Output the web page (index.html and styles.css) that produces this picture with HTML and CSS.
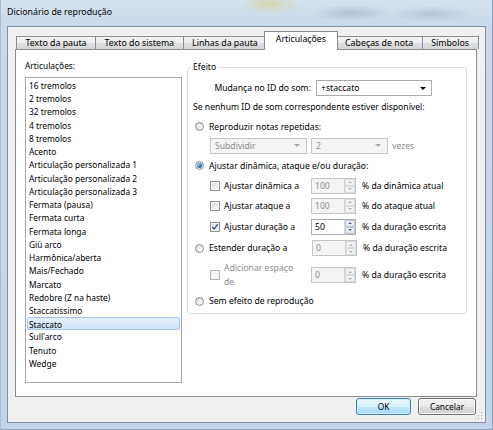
FILE: index.html
```html
<!DOCTYPE html>
<html>
<head>
<meta charset="utf-8">
<link rel="stylesheet" href="styles.css">
</head>
<body>
<div class="window">
  <div class="titlebar">
    <span class="title">Dicionário de reprodução</span>
  </div>
  <div class="client">
    <div class="tabs">
      <div class="tab">Texto da pauta</div>
      <div class="tab">Texto do sistema</div>
      <div class="tab">Linhas da pauta</div>
      <div class="tab active">Articulações</div>
      <div class="tab">Cabeças de nota</div>
      <div class="tab">Símbolos</div>
    </div>
    <div class="panel">
      <div class="leftcol">
        <div class="collabel">Articulações:</div>
        <div class="listbox">
          <div class="item">16 tremolos</div>
          <div class="item">2 tremolos</div>
          <div class="item">32 tremolos</div>
          <div class="item">4 tremolos</div>
          <div class="item">8 tremolos</div>
          <div class="item">Acento</div>
          <div class="item">Articulação personalizada 1</div>
          <div class="item">Articulação personalizada 2</div>
          <div class="item">Articulação personalizada 3</div>
          <div class="item">Fermata (pausa)</div>
          <div class="item">Fermata curta</div>
          <div class="item">Fermata longa</div>
          <div class="item">Giù arco</div>
          <div class="item">Harmônica/aberta</div>
          <div class="item">Mais/Fechado</div>
          <div class="item">Marcato</div>
          <div class="item">Redobre (Z na haste)</div>
          <div class="item">Staccatissimo</div>
          <div class="item selected">Staccato</div>
          <div class="item">Sull'arco</div>
          <div class="item">Tenuto</div>
          <div class="item">Wedge</div>
        </div>
      </div>
      <div class="group">
        <span class="legend">Efeito</span>
        <div class="row r1">
          <span class="rlabel">Mudança no ID do som:</span>
          <div class="combo main"><span class="ctext">+staccato</span><span class="arrow"></span></div>
        </div>
        <div class="row r2"><span class="plain">Se nenhum ID de som correspondente estiver disponível:</span></div>
        <div class="row r3">
          <span class="radio"></span><span>Reproduzir notas repetidas:</span>
        </div>
        <div class="row r4">
          <div class="combo dis wide"><span class="ctext">Subdividir</span><span class="arrow"></span></div>
          <div class="combo dis narrow"><span class="ctext">2</span><span class="arrow"></span></div>
          <span class="distext">vezes</span>
        </div>
        <div class="row r5">
          <span class="radio on"></span><span>Ajustar dinâmica, ataque e/ou duração:</span>
        </div>
        <div class="row r6 sub">
          <div class="chklabel"><span class="cb"></span><span>Ajustar dinâmica a</span></div>
          <div class="spin dis"><span class="stext">100</span><span class="sbtns"><span class="sb up"></span><span class="sb down"></span></span></div>
          <span class="after">% da dinâmica atual</span>
        </div>
        <div class="row r7 sub">
          <div class="chklabel"><span class="cb"></span><span>Ajustar ataque a</span></div>
          <div class="spin dis"><span class="stext">100</span><span class="sbtns"><span class="sb up"></span><span class="sb down"></span></span></div>
          <span class="after">% do ataque atual</span>
        </div>
        <div class="row r8 sub">
          <div class="chklabel"><span class="cb checked"><svg viewBox="0 0 10 10" width="8" height="8"><path d="M1.5 5 L4 7.5 L8.5 1.5" fill="none" stroke="#3d4f8a" stroke-width="1.6"/></svg></span><span>Ajustar duração a</span></div>
          <div class="spin"><span class="stext">50</span><span class="sbtns"><span class="sb up"></span><span class="sb down"></span></span></div>
          <span class="after">% da duração escrita</span>
        </div>
        <div class="row r9">
          <div class="radlabel"><span class="radio"></span><span>Estender duração a</span></div>
          <div class="spin dis"><span class="stext">0</span><span class="sbtns"><span class="sb up"></span><span class="sb down"></span></span></div>
          <span class="after">% da duração escrita</span>
        </div>
        <div class="row r10 sub">
          <div class="chklabel"><span class="cb dis"></span><span class="twoline">Adicionar espaço<br>de</span></div>
          <div class="spin dis"><span class="stext">0</span><span class="sbtns"><span class="sb up"></span><span class="sb down"></span></span></div>
          <span class="after">% da duração escrita</span>
        </div>
        <div class="row r11">
          <span class="radio"></span><span>Sem efeito de reprodução</span>
        </div>
      </div>
    </div>
    <div class="buttons">
      <div class="btn default">OK</div>
      <div class="btn">Cancelar</div>
    </div>
    <svg class="grip" width="8" height="8" viewBox="0 0 8 8">
      <rect x="6" y="0" width="1.2" height="1.2" fill="#b6b6b6"/>
      <rect x="3" y="3" width="1.2" height="1.2" fill="#b6b6b6"/>
      <rect x="6" y="3" width="1.2" height="1.2" fill="#b6b6b6"/>
      <rect x="0" y="6" width="1.2" height="1.2" fill="#b6b6b6"/>
      <rect x="3" y="6" width="1.2" height="1.2" fill="#b6b6b6"/>
      <rect x="6" y="6" width="1.2" height="1.2" fill="#b6b6b6"/>
    </svg>
  </div>
</div>
</body>
</html>
```

FILE: styles.css
```css
* { box-sizing: border-box; }
html, body { margin: 0; padding: 0; }
body {
  width: 493px;
  height: 430px;
  overflow: hidden;
  font-family: "Noto Sans", "Open Sans", sans-serif;
  font-size: 8.4px;
  color: #000;
  background: #c9d8e8;
}
.window {
  width: 493px;
  height: 430px;
  display: flex;
  flex-direction: column;
  background:
    radial-gradient(ellipse 30px 10px at 270px 4px, rgba(214, 206, 120, 0.55), rgba(214, 206, 120, 0) 100%),
    radial-gradient(ellipse 40px 8px at 350px 13px, rgba(120, 140, 160, 0.35), rgba(120, 140, 160, 0) 100%),
    radial-gradient(ellipse 40px 8px at 430px 14px, rgba(120, 140, 160, 0.3), rgba(120, 140, 160, 0) 100%),
    linear-gradient(to bottom, #d6e2ee 0px, #c9d9ea 26px, #c2d4e7 430px);
  border-left: 1px solid #a9bdd2;
  border-right: 1px solid #8ea3ba;
  border-bottom: 1px solid #8ea3ba;
}
.titlebar {
  height: 26px;
  display: flex;
  align-items: center;
  padding-left: 6px;
  padding-bottom: 2px;
  flex: none;
}
.title {
  font-size: 8.8px;
  color: #000;
}
.client {
  flex: 1;
  margin: 0 6px 6px 6px;
  border: 1px solid #8190a1;
  background: #f0f0f0;
  position: relative;
  display: flex;
  flex-direction: column;
}
.tabs {
  height: 22px;
  display: flex;
  align-items: flex-end;
  padding-left: 8px;
  flex: none;
  font-size: 8.8px;
}
.tab {
  height: 13px;
  padding: 0 8.5px;
  border: 1px solid #898c95;
  border-bottom: none;
  margin-left: -1px;
  background: linear-gradient(to bottom, #f4f4f4 0%, #ececec 50%, #dedede 51%, #d6d6d6 100%);
  display: flex;
  align-items: center;
  white-space: nowrap;
  line-height: 11px;
}
.tab:first-child { margin-left: 0; }
.tab.active {
  height: 19px;
  margin: 0 -2px -1px -3px;
  padding: 0 10.5px 3px 10.5px;
  background: #fff;
  position: relative;
  z-index: 2;
}
.tab.active + .tab { margin-left: 0; }
.panel {
  margin-left: 7px;
  width: 462px;
  height: 348px;
  border: 1px solid #898c95;
  background: #fff;
  display: flex;
  padding: 10px 9px 0 9px;
  flex: none;
  position: relative;
  z-index: 1;
}
.leftcol {
  width: 157px;
  display: flex;
  flex-direction: column;
}
.collabel {
  height: 17px;
  line-height: 12px;
}
.listbox {
  height: 306px;
  border: 1px solid #a3a9b1;
  padding: 1px;
  background: #fff;
}
.item {
  height: 13.24px;
  line-height: 13px;
  padding-left: 1px;
  border: 1px solid transparent;
  border-top: none;
  border-bottom: none;
  white-space: nowrap;
}
.item.selected {
  border: 1px solid #a6c4e8;
  border-radius: 2px;
  background: linear-gradient(to bottom, #e6f0fc, #cfe1f8);
}
.group {
  margin-left: 5px;
  margin-top: 7px;
  width: 280px;
  height: 247px;
  border: 1px solid #d5dfe5;
  border-radius: 3px;
  padding-top: 11px;
  position: relative;
  font-size: 8.65px;
}
.legend {
  position: absolute;
  left: 3px;
  top: -7px;
  padding: 0 2px;
  background: #fff;
  line-height: 12px;
}
.row {
  display: flex;
  align-items: center;
  white-space: nowrap;
}
.r1 { height: 18px; }
.r2 { height: 20px; padding-left: 5px; }
.r3 { height: 19px; padding-left: 7px; }
.r4 { height: 19px; padding-left: 22px; }
.r5 { height: 21px; padding-left: 7px; }
.r6 { height: 19px; }
.r7 { height: 21px; }
.r8 { height: 21px; }
.r9 { height: 22px; padding-left: 7px; }
.r10 { height: 32px; }
.r11 { height: 20px; padding-left: 7px; }
.sub { padding-left: 22px; }
.rlabel {
  width: 123px;
  text-align: right;
  margin-right: 5px;
}
.combo {
  height: 16px;
  border: 1px solid #abadb3;
  background: #fff;
  display: flex;
  align-items: center;
  position: relative;
}
.combo.main { width: 116px; }
.combo.wide { width: 97px; margin-right: 4px; }
.combo.narrow { width: 77px; margin-right: 4px; }
.ctext { flex: 1; padding-left: 4px; }
.arrow {
  width: 0;
  height: 0;
  border-left: 3px solid transparent;
  border-right: 3px solid transparent;
  border-top: 3px solid #000;
  margin-right: 5px;
}
.combo.dis {
  background: #f4f4f4;
  border-color: #c3c6c9;
  color: #8d8d8d;
}
.combo.dis .arrow {
  border-top-color: #a8a8a8;
  margin-right: 6px;
}
.distext { color: #8d8d8d; }
.radio {
  width: 9px;
  height: 9px;
  border-radius: 50%;
  border: 1px solid #8e8f8f;
  background: radial-gradient(circle at 65% 65%, #f8f8f8 0%, #e0e2e4 70%, #d2d5d9 100%);
  margin-right: 5px;
  flex: none;
  display: flex;
  align-items: center;
  justify-content: center;
}
.radio.on::after {
  content: "";
  width: 5px;
  height: 5px;
  border-radius: 50%;
  background: radial-gradient(circle at 35% 35%, #8fcdf5 0%, #2f6fb5 55%, #183f78 100%);
}
.chklabel {
  width: 101px;
  display: flex;
  align-items: center;
}
.radlabel {
  width: 117px;
  display: flex;
  align-items: center;
}
.cb {
  width: 10px;
  height: 10px;
  border: 1px solid #8e8f8f;
  background: linear-gradient(135deg, #d4d7db 0%, #eceef0 60%, #fbfbfb 100%);
  box-shadow: inset 0 0 0 1px #f6f6f6;
  margin-right: 4px;
  flex: none;
  display: flex;
  align-items: center;
  justify-content: center;
}
.cb.dis {
  border-color: #b5b5b5;
  background: #f4f4f4;
}
.twoline {
  color: #8d8d8d;
  line-height: 14px;
  white-space: normal;
}
.spin {
  width: 45px;
  height: 16px;
  border: 1px solid #abadb3;
  background: #fff;
  display: flex;
  margin-right: 6px;
  flex: none;
}
.spin.dis {
  background: #f4f4f4;
  border-color: #c3c6c9;
  color: #8d8d8d;
}
.stext {
  flex: 1;
  padding-left: 3px;
  line-height: 14px;
}
.sbtns {
  width: 11px;
  display: flex;
  flex-direction: column;
  border-left: 1px solid #d0d4da;
}
.sb {
  flex: 1;
  display: flex;
  align-items: center;
  justify-content: center;
  background: linear-gradient(to bottom, #f5f6f8, #e3e6ea);
  border: 1px solid #b7c3d3;
  border-radius: 1px;
}
.sb.up::after {
  content: "";
  border-left: 2px solid transparent;
  border-right: 2px solid transparent;
  border-bottom: 2px solid #4f5f7c;
}
.sb.down::after {
  content: "";
  border-left: 2px solid transparent;
  border-right: 2px solid transparent;
  border-top: 2px solid #4f5f7c;
}
.spin.dis .sb {
  border-color: #d8dbe0;
  background: #f2f2f2;
}
.spin.dis .sb.up::after { border-bottom-color: #b3b3b3; }
.spin.dis .sb.down::after { border-top-color: #b3b3b3; }
.buttons {
  display: flex;
  justify-content: flex-end;
  gap: 7px;
  padding-right: 9px;
  margin-top: 1px;
}
.btn {
  height: 17px;
  border: 1px solid #707070;
  border-radius: 3px;
  background: linear-gradient(to bottom, #f2f2f2 0%, #ebebeb 50%, #dddddd 51%, #cfcfcf 100%);
  box-shadow: inset 0 0 0 1px #fcfcfc;
  display: flex;
  align-items: center;
  justify-content: center;
  width: 58px;
}
.btn.default {
  width: 55px;
  border-color: #3c7fb1;
  background: linear-gradient(to bottom, #eaf6fd 0%, #d9f0fc 50%, #bee6fd 51%, #a7d9f5 100%);
  box-shadow: inset 0 0 0 1px #d4ecf9;
}
.grip {
  position: absolute;
  right: 2px;
  bottom: 2px;
}
```
